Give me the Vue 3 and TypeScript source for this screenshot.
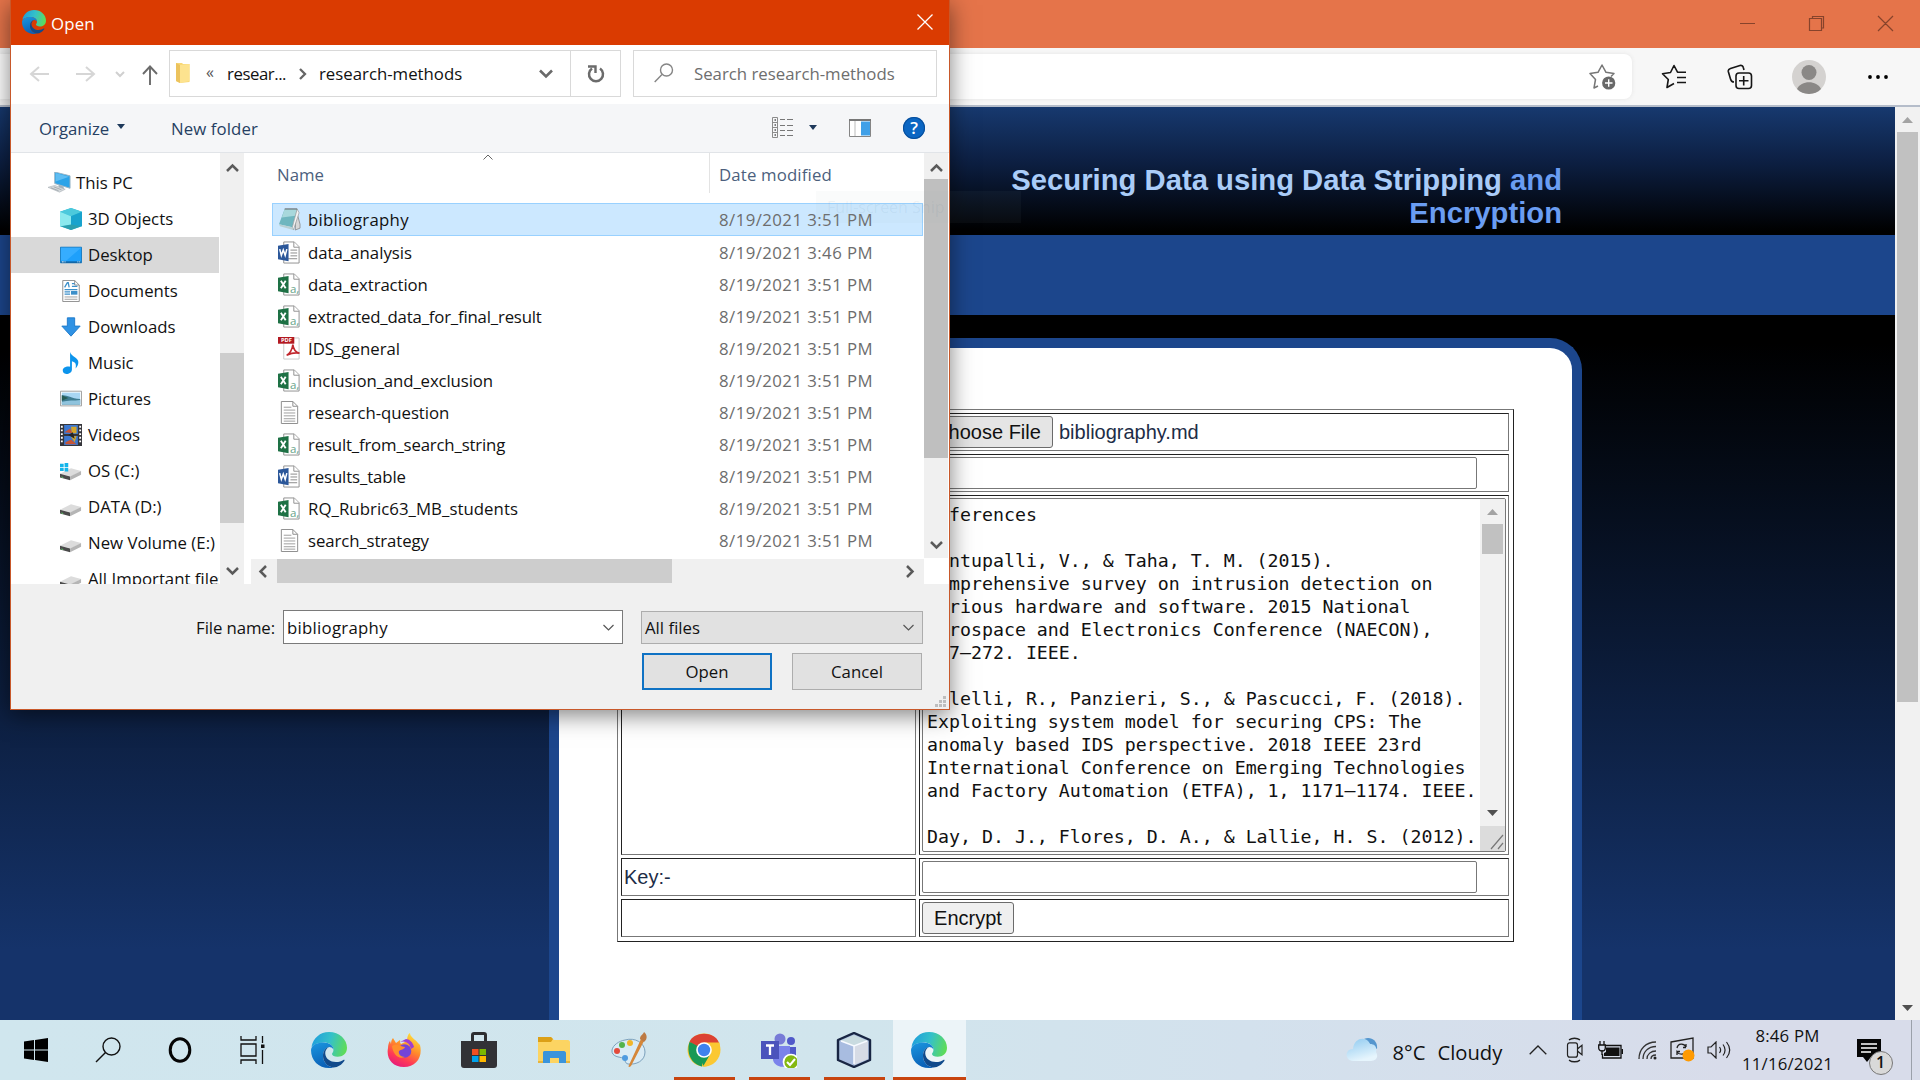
<script setup lang="ts">
interface Entry { label: string; icon: string; active?: boolean }
interface FileEntry { name: string; icon: string; date: string; track?: number }

const places: Entry[] = [
  { label: '3D Objects', icon: 'cube' },
  { label: 'Desktop', icon: 'desktop', active: true },
  { label: 'Documents', icon: 'docs' },
  { label: 'Downloads', icon: 'down' },
  { label: 'Music', icon: 'music' },
  { label: 'Pictures', icon: 'pics' },
  { label: 'Videos', icon: 'video' },
  { label: 'OS (C:)', icon: 'osdrive' },
  { label: 'DATA (D:)', icon: 'drive' },
  { label: 'New Volume (E:)', icon: 'drive' },
  { label: 'All Important files', icon: 'drive' },
]

const d = '8/19/2021 3:51 PM'
const files: FileEntry[] = [
  { name: 'bibliography', icon: 'notepad', date: d, track: 0.27 },
  { name: 'data_analysis', icon: 'word', date: '8/19/2021 3:46 PM' },
  { name: 'data_extraction', icon: 'csv', date: d, track: -0.1 },
  { name: 'extracted_data_for_final_result', icon: 'csv', date: d, track: -0.19 },
  { name: 'IDS_general', icon: 'pdf', date: d },
  { name: 'inclusion_and_exclusion', icon: 'csv', date: d, track: -0.12 },
  { name: 'research-question', icon: 'text', date: d, track: -0.06 },
  { name: 'result_from_search_string', icon: 'csv', date: d, track: -0.17 },
  { name: 'results_table', icon: 'word', date: d, track: -0.12 },
  { name: 'RQ_Rubric63_MB_students', icon: 'csv', date: d, track: 0.05 },
  { name: 'search_strategy', icon: 'text', date: d, track: -0.1 },
]

const references = [
  'References',
  '',
  'Bontupalli, V., & Taha, T. M. (2015).',
  'Comprehensive survey on intrusion detection on',
  'various hardware and software. 2015 National',
  'Aerospace and Electronics Conference (NAECON),',
  '267–272. IEEE.',
  '',
  'Colelli, R., Panzieri, S., & Pascucci, F. (2018).',
  'Exploiting system model for securing CPS: The',
  'anomaly based IDS perspective. 2018 IEEE 23rd',
  'International Conference on Emerging Technologies',
  'and Factory Automation (ETFA), 1, 1171–1174. IEEE.',
  '',
  'Day, D. J., Flores, D. A., & Lallie, H. S. (2012).',
].join('\n')

const page = '<path d="M6 1h11l5 5v17H6z" fill="#fff" stroke="#8f8f8f"/><path d="M16.500 1v5.500H22" fill="#fff" stroke="#8f8f8f"/>'
const driveArt = '<path d="M0 15 12 9l11 3-11 6z" fill="#dcdcdc"/><path d="M0 15v4l11 3v-4z" fill="#4a4a4a"/><path d="M11 18l12-6v4l-12 6z" fill="#b5b5b5"/><path d="M1.500 18.500l2 .6" stroke="#5fd06a"/>'

/* File and folder glyphs, drawn on a 24 unit grid */
const glyphs: Record<string, string> = {
  pc: '<path d="M7 0l16 4v13L7 12z" fill="#2ba3e8" stroke="#9bb4c4"/><path d="M8 1l14 4-14 5z" fill="#5fbdf2"/><path d="M11 13l5 2 1 3h-6z" fill="#9fb3bf"/><path d="M0 16l7-2 11 4-6 3z" fill="#d5dadd" stroke="#a7afb4" stroke-width=".6"/><path d="M3 16.500l8 3M6 15.500l8 3" stroke="#8d979d" stroke-width=".7"/>',
  cube: '<path d="M12 0l12 4v16l-12 4L0 20V4z" fill="#28b9d4"/><path d="M12 0l12 4-12 5L0 4z" fill="#4cc9dc"/><path d="M0 4l12 5v10L0 20z" fill="#8be9ee"/><path d="M12 9l12-5v16l-12-1z" fill="#19a3cd"/><path d="M12 18l11 2-11 4-11-4z" fill="#2b9fae"/>',
  desktop: '<path d="M.5 3.500h23v17H.5z" fill="#1ea0fb" stroke="#1377bd"/><path d="M1 4h22L7 18H1z" fill="#36adff"/><path d="M1 19h22v1.500H1z" fill="#0f5d9c"/><path d="M2 19.500h2m1 0h1m13 0h1m1 0h1" stroke="#fff"/>',
  docs: '<path d="M3 .5h13l5 5v18H3z" fill="#fff" stroke="#888"/><path d="M16 .5v5h5" fill="none" stroke="#888"/><path d="M5 8l3-5h1l1 5M13 4h3M13 7h6M5 10.500h14M5 13h6M5 15.500h6" stroke="#3c8fc9" fill="none" stroke-width="1.400"/><path d="M12 12h7v4h-7z" fill="#3c8fc9"/><path d="M5 18.500h14M5 21h14" stroke="#999"/>',
  down: '<path d="M8 2h8v9h6L12 22 2 11h6z" fill="#2f92e4" stroke="#1d78c9"/>',
  music: '<path d="M11 0c1 5 9 6 9 11 0 3-1 5-3 7 1-5 0-7-4-8v9c0 3-3 5-6 5s-4-2-4-4c0-3 4-5 8-4z" fill="#0c94ec"/>',
  pics: '<path d="M.5 3.500h23v16H.5z" fill="#fff" stroke="#999"/><path d="M2 5h20v13H2z" fill="#a8d6f3"/><path d="M2 8c5-1 9 3 20 4v6H2z" fill="#3e7c92"/><path d="M2 15c7-2 13-1 20-2v5H2z" fill="#8fc3dd"/><path d="M2 8l7 3-7 3z" fill="#255c55"/>',
  video: '<path d="M0 0h24v24H0z" fill="#35353a"/><path d="M4.500 1h15v10h-15zM4.500 13h15v10h-15z" fill="#3d78cf"/><path d="M5 9l6-4 3 5zM6 20l6-3 6 5H6z" fill="#c55538"/><path d="M12 3h6v7h-5zM12 14l6-1-2 7z" fill="#d4a62b"/><path d="M14 9l-5 3 7 4z" fill="#242424"/><path d="M2 2v20M22 2v20" stroke="#fff" stroke-width="2" stroke-dasharray="2 2"/>',
  drive: driveArt,
  osdrive: driveArt + '<path d="M0 4h4v3.500H0zM5 3.400h4v4.100H5zM0 8.500h4V12H0zM5 8.500h4v4.100H5z" fill="#14b5ea"/>',
  notepad: '<path d="M19 2l4 15v4l-5 2z" fill="#d8d8d8" stroke="#777" stroke-width=".7"/><path d="M7 1h13l-5 19-14-3z" fill="#6fb6bf"/><path d="M7 1h13l-2 7-14 2z" fill="#a8d8dc"/><path d="M20 1l-5 19 1 3 6-18z" fill="#f5f5f5" stroke="#999" stroke-width=".7"/><path d="M1 17l14 3 1 3-14-4z" fill="#b9cfd2"/><path d="M7 1h13" stroke="#555"/>',
  word: page + '<path d="M13 9.500h7M13 12.500h7M13 15.500h7M9 18.500h11" stroke="#888"/><path d="M0 5l11-2v18L0 19z" fill="#2b579a"/><path d="M1.800 8.500l1.700 6.500 2-5.500 2 5.500 1.700-6.500" fill="none" stroke="#fff" stroke-width="1.600"/>',
  csv: page + '<path d="M0 5l11-2v18L0 19z" fill="#1e7145"/><path d="M3 8l5 8M8 8l-5 8" stroke="#fff" stroke-width="1.900"/><text x="12.500" y="20.500" font-size="12" font-family="Open Sans" fill="#67a58a">a,</text>',
  pdf: '<path d="M6 1h16v22H6z" fill="#fff" stroke="#c9c9c9"/><path d="M0 0h17v7H0z" fill="#b31921"/><text x="3" y="5.700" font-size="6" font-weight="700" font-family="Open Sans" fill="#fff">PDF</text><path d="M9 19c3-1 6-6 6.500-11 .5 5 3 8 7 9-4-1-9 0-13.500 2z" fill="none" stroke="#c1272d" stroke-width="1.700"/>',
  text: '<path d="M3.500.5h12l5 5v18h-17z" fill="#fff" stroke="#8b8b8b"/><path d="M15.500.5v5h5" fill="none" stroke="#8b8b8b"/><path d="M6 6.500h8M6 9.500h12M6 12.500h12M6 15.500h12M6 18.500h12M6 21h12" stroke="#9c9c9c"/>',
}

const edge = `<defs><linearGradient id="eg1" x1="0" y1=".4" x2="1" y2=".6"><stop offset="0" stop-color="#1f9fdc"/><stop offset=".5" stop-color="#35c1c8"/><stop offset="1" stop-color="#60dd54"/></linearGradient><linearGradient id="eg2" x1="0" y1="0" x2=".3" y2="1"><stop offset="0" stop-color="#1b97e0"/><stop offset="1" stop-color="#0b62b8"/></linearGradient></defs>
<path d="M.3 10C1.500 4 6 0 12 0c7 0 12 5 12 10.500 0 4-3 6-6.200 6-2.300 0-3.800-.9-3.800-1.900 0-.7 1-1.100 1-2.800 0-3-3-4.800-6.500-4.800C4 7 1 9 .3 10z" fill="url(#eg1)"/>
<path d="M0 12c.3-3.500 4-5 8.500-5C12 7 15 9 15 11.800c-.5-1.300-2-1.800-3-1.800-2.500.5-4 3-4 6 0 4 3 7.300 7 7.600-1 .4-2 .4-3 .4C5 24 0 19 0 12z" fill="url(#eg2)"/>
<path d="M8 16c0-3 1.500-5.500 4-6-1.800 1-2.700 2.800-2.500 4.500C9.800 18 13 20 16.500 20c2.300 0 4-.7 5.100-1.400.6-.3 1 .1.600.7C20.500 21.800 18 23.500 15 23.600c-4-.3-7-3.600-7-7.600z" fill="#114a8b"/>`

/* Taskbar application icons, drawn on a 36 unit grid */
const apps: { art: string; open?: boolean; active?: boolean }[] = [
  { art: `<g transform="scale(1.500)">${edge}</g>` },
  { art: '<defs><linearGradient id="ff" x1=".8" y1="0" x2=".3" y2="1"><stop offset="0" stop-color="#ffe83a"/><stop offset=".45" stop-color="#ff8a2a"/><stop offset=".75" stop-color="#ff3a56"/><stop offset="1" stop-color="#e61b7c"/></linearGradient></defs><path d="M7 6l3 5 4-3c0 2 0 3 1 4l6-3c0-4 1-7 3-8 0 4 5 6 8 10l2 2c3 12-4 22-16 22C6 35 0 26 2 16c0-3 1-6 2-7l1 3c0-3 1-5 2-6z" fill="url(#ff)"/><circle cx="18.500" cy="19" r="6.800" fill="#7544d8"/><path d="M6 14c4-3 8 0 13 1-1 3-4 2-6 4-1 3 2 6 6 6-7 3-12-3-13-11z" fill="#ff8f2c"/><path d="M14 10c5-2 10 1 11 7l3-2c-1-5-5-8-8-8z" fill="#a03fd0"/>' },
  { art: '<path d="M10 10V3c0-2 1-3 3-3h10c2 0 3 1 3 3v7h-3V3H13v7z" fill="#2d2d30"/><path d="M0 9h36v24c0 2-1 3-3 3H3c-2 0-3-1-3-3z" fill="#323236"/><path d="M11 17h6.500v6H11z" fill="#f04f23"/><path d="M18.500 17H25v6h-6.500z" fill="#7db700"/><path d="M11 24h6.500v6H11z" fill="#00a2ec"/><path d="M18.500 24H25v6h-6.500z" fill="#ffb800"/>' },
  { art: '<path d="M2 5h13l3 3h14c1 0 2 1 2 2v21H2z" fill="#fcd462"/><path d="M2 5h13l2 2-2 3H2z" fill="#dca017"/><path d="M8 19h20c1 0 2 1 2 2v10h-7v-5h-9v5H7V20z" fill="#3a94db"/><path d="M2 29h5v2H2zM30 29h4v2h-4z" fill="#e8b43c"/>' },
  { art: '<path d="M14 8c10-3 20 3 20 12S25 33 17 32c-4-1-2-5-5-6S0 25 1 18c1-5 7-9 13-10z" fill="#d9ebf5" stroke="#7ba0bb"/><circle cx="6" cy="19" r="3" fill="#e34b3c"/><circle cx="11" cy="13" r="3" fill="#53b34c"/><circle cx="19" cy="11" r="3" fill="#f1b62b"/><circle cx="14" cy="26" r="3" fill="#4f9be0"/><path d="M30 7l3 2-13 25c-2 2-3 1-2-1z" fill="#d5873a"/><path d="M29 7c0-4 3-4 4-7 3 2 4 7 0 10z" fill="#bd7a43"/>' },
  { open: true, art: '<circle cx="18" cy="18" r="16.500" fill="#fbc832"/><path d="M18 18L3.500 10C1 17 2 31 16 34.500z" fill="#189955"/><path d="M18 18L3.500 10C8-1 29-1 33 11H18z" fill="#dc4233"/><path d="M4 10l8 13 6 11.400L25 21z" fill="#189955"/><path d="M18 10.500h15.500C36 23 28 35 17 34.500L25 21z" fill="#fbc832"/><circle cx="18" cy="18" r="7.800" fill="#fff"/><circle cx="18" cy="18" r="6.200" fill="#3f82ee"/>' },
  { open: true, art: '<circle cx="19" cy="7" r="5.500" fill="#777bd7"/><circle cx="30" cy="9" r="4" fill="#5059c9"/><path d="M23 15h12v11c0 6-9 8-12 2z" fill="#5059c9"/><path d="M12 14h17v14c0 9-15 9-17 0z" fill="#7b83eb"/><path d="M0 9h18v18H0z" fill="#4b53bc"/><path d="M5 13.500h8M9 13.500V23" stroke="#fff" stroke-width="2.300"/><circle cx="30" cy="30" r="7.500" fill="#84b812" stroke="#fff" stroke-width="1.700"/><path d="M26 30l3 3 5-6" fill="none" stroke="#fff" stroke-width="2"/>' },
  { open: true, art: '<path d="M18 1l16 7v20l-16 7L2 28V8z" fill="#a9bddd" stroke="#182543" stroke-width="2.400" stroke-linejoin="round"/><path d="M18 3l14 6-14 5L4 9z" fill="#c9dbe0"/><path d="M4 9l14 5v18L4 27z" fill="#a8bce0"/><path d="M18 14l14-5v18l-14 6z" fill="#d6dbe5"/><path d="M18 14v18M5 9l13 5 13-5" fill="none" stroke="#f7faff" stroke-width="1.500"/>' },
  { open: true, active: true, art: `<g transform="scale(1.500)">${edge}</g>` },
]
</script>

<template>
  <div class="screen">
    <section class="browser">
      <header class="titlebar">
        <svg width="180" height="48" viewBox="0 0 180 48" fill="none" stroke="#87432b" stroke-width="1.200">
          <path d="M0 23.500h15M69.500 18.500h12v12h-12zM72.500 18v-1.500h11v11.500H82M138 16l15 15M153 16l-15 15" />
        </svg>
      </header>
      <div class="toolbar">
        <div class="address">
          <svg width="28" height="28" viewBox="0 0 28 28"><path d="M9 23l-4 2 1.500-8.500L1 10.500l8-1.200L13 2l4 7.300 8 1.200-3 3" fill="none" stroke="#767676" stroke-width="1.500" stroke-linejoin="round" /><circle cx="19.700" cy="20" r="6.600" fill="#686868" /><path d="M16 20h7.500M19.700 16.300v7.500" stroke="#fff" stroke-width="1.400" /></svg>
        </div>
        <svg class="t-star" width="26" height="26" viewBox="0 0 26 26" fill="none" stroke="#161616" stroke-width="1.600" stroke-linejoin="round"><path d="M13 19.500L6 23.500l1.300-8L1.500 9.700l8-1.200L13 1.500l3.500 6.700H25M16 13.500h9M16 18.500h9" /></svg>
        <svg class="t-coll" width="26" height="26" viewBox="0 0 26 26" fill="none" stroke="#161616" stroke-width="1.600"><path d="M7 18c-2 0-3-1-3.500-3L1.300 7.500C1 6 2 5 3.500 4.500L13 1.500c1.500-.4 3 .3 3.300 2L17 6" /><rect x="9" y="9" width="15.500" height="15.500" rx="3" /><path d="M16.700 12v9.500M12 16.700h9.500" /></svg>
        <svg class="t-user" width="34" height="34" viewBox="0 0 34 34"><circle cx="17" cy="17" r="17" fill="#d4d2d0" /><circle cx="17" cy="12.500" r="7.500" fill="#8a8886" /><path d="M5 29c4-9 20-9 24 0-6 6.500-18 6.500-24 0z" fill="#8a8886" /></svg>
        <svg class="t-dots" width="20" height="4" viewBox="0 0 20 4"><circle cx="2" cy="2" r="1.900" /><circle cx="10" cy="2" r="1.900" /><circle cx="18" cy="2" r="1.900" /></svg>
      </div>
      <div class="viewport">
        <main class="site">
          <div class="masthead">
            <h1>Securing Data using Data Stripping <span>and<br />Encryption</span></h1>
          </div>
          <div class="menu-band"></div>
          <div class="site-body">
            <div class="panel">
              <div class="form-table">
                <div class="cell"></div>
                <div class="cell"><span class="btn choose">Choose File</span><span class="chosen">bibliography.md</span></div>
                <div class="cell"></div>
                <div class="cell"><div class="field"></div></div>
                <div class="cell"></div>
                <div class="cell">
                  <div class="area">
                    <pre>{{ references }}</pre>
                    <div class="area-bar">
                      <svg width="25" height="25" viewBox="0 0 25 25"><path d="M7 16l5.500-6 5.500 6z" fill="#a3a3a3" /></svg>
                      <div class="area-thumb"></div>
                      <svg class="area-down" width="25" height="25" viewBox="0 0 25 25"><path d="M7 10l5.500 6 5.500-6z" fill="#505050" /></svg>
                      <svg class="grip" width="25" height="25" viewBox="0 0 25 25"><path d="M11 23L23 9M18 23l5-6" stroke="#777" stroke-width="1.200" /></svg>
                    </div>
                  </div>
                </div>
                <div class="cell">Key:-</div>
                <div class="cell"><div class="field"></div></div>
                <div class="cell"></div>
                <div class="cell"><span class="btn encrypt">Encrypt</span></div>
              </div>
            </div>
          </div>
        </main>
        <aside class="page-bar">
          <svg width="25" height="25" viewBox="0 0 25 25"><path d="M7 16l5.500-6 5.500 6z" fill="#a3a3a3" /></svg>
          <div class="page-thumb"></div>
          <svg class="last" width="25" height="25" viewBox="0 0 25 25"><path d="M7 10l5.500 6 5.500-6z" fill="#505050" /></svg>
        </aside>
      </div>
    </section>

    <section class="dialog">
      <header class="d-title">
        <svg width="24" height="24" viewBox="0 0 24 24" v-html="edge"></svg>
        <span>Open</span>
        <svg class="d-close" width="16" height="16" viewBox="0 0 16 16"><path d="M.5.5l15 15M15.500.5l-15 15" stroke="#fff" stroke-width="1.300" /></svg>
      </header>
      <div class="d-nav">
        <svg class="arrows" width="130" height="46" viewBox="0 0 130 46" fill="none" stroke-width="2">
          <path d="M38 24H21M28 17l-8 7 8 7M65 24h17M75 17l8 7-8 7" stroke="#d6d6d6" />
          <path d="M105 22l4 4 4-4" stroke="#d0d0d0" />
        </svg>
        <svg class="up" width="18" height="20" viewBox="0 0 18 20" fill="none" stroke="#6b6b6b" stroke-width="1.900"><path d="M9 20V2M2 9l7-7.500L16 9" /></svg>
        <div class="crumbs">
          <svg class="folder" width="14" height="22" viewBox="0 0 14 22"><path d="M0 1h6l1 1h6.500v18L4 21l-4-2z" fill="#f8d775" /><path d="M4 3l9.500-1v17L4 21z" fill="#fde38f" /><path d="M0 1l4 2v18l-4-2z" fill="#ecc35d" /></svg>
          <span class="chev">«</span>
          <span class="c1">resear...</span>
          <svg class="sep" width="8" height="12" viewBox="0 0 8 12"><path d="M1 1l5 5-5 5" fill="none" stroke="#666" stroke-width="2.300" /></svg>
          <span class="c2">research-methods</span>
          <svg class="drop" width="14" height="10" viewBox="0 0 14 10"><path d="M1 1.500l6 6 6-6" fill="none" stroke="#6a6a6a" stroke-width="2.600" /></svg>
          <div class="reload"><svg width="18" height="18" viewBox="0 0 18 18"><path d="M5 3.500a7 7 0 1 0 8 0" fill="none" stroke="#6b6b6b" stroke-width="2.500" /><path d="M1 1.500h7.500V8" fill="none" stroke="#6b6b6b" stroke-width="2.400" /></svg></div>
        </div>
        <div class="search">
          <svg width="20" height="20" viewBox="0 0 20 20" fill="none" stroke="#858585" stroke-width="1.400"><circle cx="12.500" cy="7" r="6" /><path d="M8 11.500L.7 19" /></svg>
          <span>Search research-methods</span>
        </div>
      </div>
      <div class="d-tools">
        <span class="organize">Organize</span>
        <svg class="tri" width="8" height="5" viewBox="0 0 8 5"><path d="M0 0h8L4 5z" fill="#1e395b" /></svg>
        <span class="newf">New folder</span>
        <svg class="views" width="22" height="22" viewBox="0 0 22 22" fill="none" stroke="#8b8b8b"><path d="M.5.5h5v20h-5zM.5 5.500h5M.5 10.500h5M.5 15.500h5" /><path d="M8 2.500h5m2 0h6M8 8.500h5m2 0h6M8 13.500h5m2 0h6M8 18.500h5m2 0h6" stroke="#777" stroke-width="1.200" /><path d="M2.500 3h1.500M2.500 8h1.500M2.500 13h1.500M2.500 18h1.500" stroke="#555" stroke-width="1.500" /></svg>
        <svg class="tri2" width="8" height="5" viewBox="0 0 8 5"><path d="M0 0h8L4 5z" fill="#1e395b" /></svg>
        <svg class="pane" width="22" height="18" viewBox="0 0 22 18"><path d="M.5.5h21v17H.5z" fill="#fff" stroke="#858585" /><path d="M0 1h22" stroke="#777" stroke-width="2" /><path d="M12 2.500h9v14h-9z" fill="#40a0e8" /><path d="M6 2v15" stroke="#bbb" /></svg>
        <span class="help">?</span>
      </div>
      <div class="d-main">
        <nav class="tree">
          <div class="node root"><svg width="23" height="23" viewBox="0 0 24 24" v-html="glyphs.pc"></svg><span>This PC</span></div>
          <div v-for="p in places" :key="p.label" class="node" :class="{ sel: p.active }">
            <svg width="22" height="22" viewBox="0 0 24 24" v-html="glyphs[p.icon]"></svg><span>{{ p.label }}</span>
          </div>
        </nav>
        <div class="bar tree-bar">
          <svg width="24" height="27" viewBox="0 0 24 27"><path d="M7 18l5.500-5.500L18 18" fill="none" stroke="#5a5a5a" stroke-width="2.500" /></svg>
          <div class="thumb t1"></div>
          <svg class="last" width="24" height="26" viewBox="0 0 24 26"><path d="M7 10l5.500 5.500L18 10" fill="none" stroke="#5a5a5a" stroke-width="2.500" /></svg>
        </div>
        <div class="list-wrap">
          <div class="list-top">
            <div class="list">
              <div class="cols">
                <span class="col-name">Name<svg class="sort" width="10" height="6" viewBox="0 0 10 6"><path d="M.5 5.500L5 1l4.500 4.500" fill="none" stroke="#666" /></svg></span>
                <span class="col-date">Date modified</span>
              </div>
              <div v-for="(f, i) in files" :key="f.name" class="row" :class="{ picked: i === 0 }">
                <svg width="23" height="23" viewBox="0 0 24 24" v-html="glyphs[f.icon]"></svg>
                <span class="fname" :style="{ letterSpacing: (f.track ?? 0) + 'px' }">{{ f.name }}</span>
                <span class="fdate">{{ f.date }}</span>
              </div>
            </div>
            <div class="bar">
              <svg width="24" height="26" viewBox="0 0 24 26"><path d="M7 18l5.500-5.500L18 18" fill="none" stroke="#5a5a5a" stroke-width="2.500" /></svg>
              <div class="thumb t2"></div>
              <svg class="last" width="24" height="26" viewBox="0 0 24 26"><path d="M7 10l5.500 5.500L18 10" fill="none" stroke="#5a5a5a" stroke-width="2.500" /></svg>
            </div>
          </div>
          <div class="hbar">
            <svg width="26" height="24" viewBox="0 0 26 24"><path d="M15 7l-5.500 5.500L15 18" fill="none" stroke="#5a5a5a" stroke-width="2.500" /></svg>
            <div class="hthumb"></div>
            <svg class="hlast" width="26" height="24" viewBox="0 0 26 24"><path d="M9 7l5.500 5.500L9 18" fill="none" stroke="#5a5a5a" stroke-width="2.500" /></svg>
          </div>
        </div>
      </div>
      <footer class="d-foot">
        <div class="f-row">
          <label>File name:</label>
          <div class="combo name">bibliography<svg width="11" height="7" viewBox="0 0 11 7"><path d="M.5 1l5 5 5-5" fill="none" stroke="#555" stroke-width="1.200" /></svg></div>
          <div class="combo type">All files<svg width="11" height="7" viewBox="0 0 11 7"><path d="M.5 1l5 5 5-5" fill="none" stroke="#555" stroke-width="1.200" /></svg></div>
        </div>
        <div class="f-row buttons">
          <button class="primary">Open</button>
          <button>Cancel</button>
        </div>
        <svg class="size" width="12" height="12" viewBox="0 0 12 12" fill="#bdbdbd"><path d="M8 0h3v3H8zM4 4h3v3H4zM8 4h3v3H8zM0 8h3v3H0zM4 8h3v3H4zM8 8h3v3H8z" /></svg>
      </footer>
    </section>
    <div class="snip-tip">Full-screen Snip</div>

    <footer class="taskbar">
      <div class="sys"><svg width="24" height="24" viewBox="0 0 24 24"><path d="M0 3.500l10-1.500v9.500H0zM11 1.900L24 0v11.500H11zM0 12.500h10V22L0 20.500zM11 12.500h13V24l-13-1.900z" /></svg></div>
      <div class="sys"><svg width="26" height="26" viewBox="0 0 26 26" fill="none" stroke="#111" stroke-width="1.400"><circle cx="16.500" cy="9.500" r="8.500" /><path d="M10.500 15.500L1 25" /></svg></div>
      <div class="sys"><svg width="24" height="28" viewBox="0 0 24 28"><ellipse cx="12" cy="14" rx="9.800" ry="11.200" fill="none" stroke="#050505" stroke-width="3" /></svg></div>
      <div class="sys"><svg width="25" height="28" viewBox="0 0 25 28" fill="none" stroke="#111" stroke-width="1.300"><path d="M1 0v4h15V0M1 8h15v12H1zM1 28v-4h15v4M22.500 0v7M22.500 14v14" /><path d="M21 8.500h3.500V12H21z" fill="#111" stroke="none" /></svg></div>
      <div v-for="(a, i) in apps" :key="i" class="app" :class="{ open: a.open, active: a.active }">
        <svg width="36" height="36" viewBox="0 0 36 36" v-html="a.art"></svg>
      </div>
      <div class="tray">
        <svg width="33" height="24" viewBox="0 0 33 24"><defs><linearGradient id="cl" x1="0" y1="0" x2=".4" y2="1"><stop offset="0" stop-color="#8fcaf0" /><stop offset="1" stop-color="#e6f5fd" /></linearGradient></defs><path d="M18 1c7-3 14 2 13 10l-7-5z" fill="#5596ce" /><path d="M7 23c-9-1-8-12 0-12C8-1 21-2 24 6c5 0 7 3 6 8 3 5 0 9-5 9z" fill="url(#cl)" /></svg>
        <span class="temp">8°C</span><span class="sky">Cloudy</span>
        <svg class="caret" width="18" height="10" viewBox="0 0 18 10"><path d="M.7 9.300L9 1l8.300 8.300" fill="none" stroke="#222" stroke-width="1.300" /></svg>
        <svg class="meet" width="18" height="26" viewBox="0 0 18 22" preserveAspectRatio="none" fill="none" stroke="#222" stroke-width="1.200"><rect x="1.500" y="5" width="10" height="12" rx="2" /><path d="M11.500 10l4.500-3v8l-4.500-3M3 2.500c3-2 8-2 11 0M3 19.500c3 2 8 2 11 0" /></svg>
        <svg class="batt" width="25" height="18" viewBox="0 0 25 18"><path d="M7 4.500h16V17H4.500v-4" fill="none" stroke="#111" stroke-width="1.300" /><path d="M8 6.500h13.500V15H6v-3l2-1zM23.500 8H25v5h-1.500z" fill="#111" /><path d="M2 0v4M6 0v4M.7 4h6.600v3c0 4-6.600 4-6.600 0zM4 9v5" fill="none" stroke="#111" stroke-width="1.300" /></svg>
        <svg class="wifi" width="19" height="19" viewBox="0 0 19 19" fill="none" stroke="#333" stroke-width="1.300"><path d="M1 18C1 8 8 1 18 1M5 18C5 11 10 5.500 18 5.500M9 18c0-5 4-8 9-8M13 18c0-3 2-4 5-4" /><circle cx="17" cy="17" r="1.500" fill="#222" stroke="none" /></svg>
        <svg class="upd" width="25" height="26" viewBox="0 0 25 26"><path d="M1 5l22-4v20H1z" fill="none" stroke="#222" stroke-width="1.300" /><path d="M7 11c1-5 7-5 9-1V7m0 3.500h-3M16 14c-1 4-7 4-9 1v3m0-3.500h3" fill="none" stroke="#222" stroke-width="1.300" /><circle cx="18.500" cy="18.500" r="6" fill="#ff9a00" /></svg>
        <svg class="vol" width="24" height="18" viewBox="0 0 24 18" fill="none" stroke="#222" stroke-width="1.200"><path d="M1 6h3l5-5v16l-5-5H1zM12.500 6c1.500 2 1.500 4 0 6M16 3.500c3 4 3 7 0 11M19.500 1c4 5 4 11 0 16" /></svg>
        <div class="clock"><span>8:46 PM</span><span>11/16/2021</span></div>
        <div class="note"><svg width="24" height="23" viewBox="0 0 24 23"><path d="M0 0h24v18H14l-4 5-4-5H0z" fill="#050505" /><path d="M4 5h16M4 9h16M4 13h10" stroke="#fff" stroke-width="1.300" /></svg><b>1</b></div>
        <i class="peek"></i>
      </div>
    </footer>
  </div>
</template>

<style>
body { margin: 0; overflow: hidden; }
</style>

<style scoped>
* { box-sizing: border-box; }
svg { display: block; flex: none; }
.screen { position: relative; width: 1920px; height: 1080px; display: flex; flex-direction: column; overflow: hidden; font-family: "Open Sans", sans-serif; font-size: 16.8px; color: #111; }

.browser { height: 1020px; display: flex; flex-direction: column; }
.titlebar { height: 48px; background: #e5744a; padding-left: 1740px; }
.toolbar { height: 59px; background: #f7f7f7; border-bottom: 2px solid #b5bdca; display: flex; align-items: center; }
.address { width: 1632px; height: 45px; background: #fff; border-radius: 0 8px 8px 0; box-shadow: 0 0 4px #e4e4e4; display: flex; align-items: center; justify-content: flex-end; padding-right: 15px; }
.t-star { margin-left: 29px; }
.t-coll { margin-left: 40px; }
.t-user { margin-left: 39px; }
.t-dots { margin-left: 42px; }

.viewport { flex: 1; display: flex; min-height: 0; }
.site { width: 1895px; display: flex; flex-direction: column; font-family: "Liberation Sans", Arial, sans-serif; font-size: 20px; color: #1d2d47; }
.masthead { height: 128px; background: linear-gradient(#17396f, #0c1e40 45%, #000 97%); padding: 57px 333px 0 0; }
h1 { margin: 0; text-align: right; font-size: 29.24px; line-height: 33px; font-weight: 700; color: #aaccf8; }
h1 span { color: #6a9df2; }
.menu-band { height: 80px; background: #1c468c; }
.site-body { flex: 1; background: linear-gradient(#000 4%, #15336a 90%); padding: 23px 0 0 549px; min-height: 0; }
.panel { width: 1033px; height: 100%; background: #fff; border: solid #1c468c; border-width: 10px 10px 0; border-radius: 32px 32px 0 0; padding: 61px 0 0 58px; }
.form-table { width: 897px; height: 533px; border: 1px solid #777; border-right-color: #222; border-bottom-color: #222; padding: 3px; display: grid; grid-template-columns: 295px 590px; grid-template-rows: 38px 38px 360px 38px 38px; gap: 3px; }
.cell { border: 1px solid #777; border-top-color: #222; border-left-color: #222; padding: 2px; display: flex; align-items: center; }
.btn { height: 32px; border: 1px solid #6b6b6b; border-radius: 3px; background: #efefef; color: #111; display: flex; align-items: center; justify-content: center; }
.choose { width: 131px; background: #e5e5e5; }
.encrypt { width: 92px; }
.chosen { margin-left: 6px; }
.field { width: 555px; height: 32px; border: 1px solid #777; border-radius: 2px; }
.area { width: 584px; height: 354px; border: 1px solid #777; border-radius: 2px; display: flex; overflow: hidden; }
.area pre { flex: 1; margin: 0; padding: 4px 0 0 4px; font-family: "DejaVu Sans Mono", monospace; font-size: 18.25px; line-height: 23px; color: #111; overflow: hidden; }
.area-bar { width: 25px; background: #f1f1f1; display: flex; flex-direction: column; align-items: center; }
.area-thumb { width: 21px; height: 30px; background: #c1c1c1; }
.area-down { margin-top: auto; }
.grip { background: #dcdcdc; margin-top: 1px; }
.page-bar { width: 25px; background: #f1f1f1; display: flex; flex-direction: column; align-items: center; }
.page-thumb { width: 21px; height: 570px; background: #c1c1c1; }
.last { margin-top: auto; }

.dialog { position: absolute; left: 10px; top: 0; width: 940px; height: 710px; background: #fff; border: solid #c8582a; border-width: 0 1px 1px; box-shadow: 0 5px 22px rgba(0, 0, 0, .5); display: flex; flex-direction: column; color: #111; }
.d-title { height: 45px; background: #da3b01; color: #fff; display: flex; align-items: center; padding: 0 16px 0 11px; }
.d-title svg { margin-bottom: 1px; }
.d-title span { margin-left: 5px; padding-top: 1px; letter-spacing: .2px; }
.d-close { margin-left: auto; }
.d-nav { height: 59px; display: flex; align-items: flex-start; padding-top: 5px; }
.up { margin-top: 15px; }
.crumbs { width: 452px; height: 47px; margin-left: 10px; border: 1px solid #d9d9d9; display: flex; align-items: center; padding-left: 6px; }
.folder { margin-top: -2px; }
.chev { width: 15px; margin-left: 16px; color: #555; font-size: 16px; margin-top: -4px; }
.c1 { width: 60px; margin-left: 6px; white-space: nowrap; letter-spacing: -.45px; }
.sep { margin-left: 12px; }
.c2 { margin-left: 12px; white-space: nowrap; }
.drop { margin-left: auto; margin-right: 17px; }
.reload { width: 50px; height: 45px; border-left: 1px solid #d9d9d9; display: flex; align-items: center; justify-content: center; }
.search { width: 304px; height: 47px; margin-left: 12px; border: 1px solid #d9d9d9; display: flex; align-items: center; padding-left: 20px; color: #6e6e6e; }
.search span { margin-left: 20px; white-space: nowrap; }
.search svg { margin-top: -2px; }
.d-tools { height: 49px; background: #f5f6f8; border-bottom: 1px solid #e1e4e8; display: flex; align-items: center; color: #263f63; padding-left: 28px; white-space: nowrap; }
.organize { width: 71px; }
.tri { margin-left: 7px; margin-top: -3px; }
.newf { width: 87px; margin-left: 46px; letter-spacing: .1px; }
.views { margin-left: 514px; }
.tri2 { margin-left: 15px; margin-top: -1px; }
.pane { margin-left: 32px; }
.help { width: 22px; height: 22px; margin-left: 32px; margin-top: -1px; border-radius: 50%; background: #0b66c3; box-shadow: inset 0 0 0 1px #084f9c; color: #fff; display: flex; align-items: center; justify-content: center; font-weight: 600; font-size: 17px; }
.d-main { height: 431px; display: flex; overflow: hidden; }
.tree { width: 209px; padding: 12px 1px 0 0; overflow: hidden; }
.node { height: 36px; display: flex; align-items: center; padding-left: 49px; white-space: nowrap; overflow: hidden; }
.node span { padding-bottom: 1px; }
.node svg { margin-right: 6px; }
.node.root { padding-left: 37px; }
.node.root svg { margin-right: 5px; }
.node.sel { background: #d9d9d9; }
.bar { width: 24px; background: #f0f0f0; display: flex; flex-direction: column; }
.tree-bar { margin-right: 7px; }
.thumb { width: 24px; background: #cdcdcd; }
.t1 { height: 170px; margin-top: 173px; }
.t2 { height: 279px; background: #bfbfbf; }
.list-wrap { flex: 1; display: flex; flex-direction: column; }
.list-top { display: flex; height: 405px; }
.list { width: 673px; overflow: hidden; }
.cols { height: 50px; display: flex; color: #4c5f7d; }
.col-name { position: relative; width: 459px; height: 40px; padding: 10px 0 0 26px; border-right: 1px solid #e3e3e3; }
.sort { position: absolute; left: 232px; top: 1px; }
.col-date { padding: 10px 0 0 9px; letter-spacing: .15px; }
.row { height: 32px; display: flex; align-items: center; margin: 0 1px 0 21px; padding-left: 6px; }
.row .fname { width: 411px; margin-left: 7px; }
.row .fdate { color: #6d6d6d; white-space: nowrap; letter-spacing: .44px; }
.row.picked { background: #cce8ff; border: 1px solid #99d1ff; height: 33px; padding-left: 5px; }
.row:last-child { margin-bottom: -1px; }
.hbar { width: 673px; height: 25px; margin-top: 1px; background: #f0f0f0; display: flex; }
.hthumb { width: 395px; height: 24px; background: #cdcdcd; }
.hlast { margin-left: auto; }
.d-foot { flex: 1; background: #f0f0f0; position: relative; padding-top: 26px; }
.f-row { display: flex; align-items: center; }
label { width: 264px; text-align: right; letter-spacing: -.1px; }
.combo { height: 34px; border: 1px solid #7a7a7a; background: #fff; display: flex; align-items: center; justify-content: space-between; padding: 0 8px 0 3px; }
.name { width: 340px; margin-left: 8px; padding-top: 1px; letter-spacing: .27px; }
.type { width: 282px; height: 33px; margin-left: 18px; background: #e1e1e1; border-color: #adadad; }
.buttons { margin-top: 9px; padding-left: 631px; gap: 20px; }
button { width: 130px; height: 37px; padding: 0; border: 1px solid #adadad; background: #e1e1e1; font: inherit; color: #111; }
button.primary { border: 2px solid #0f72c4; }
.size { position: absolute; right: 2px; bottom: 1px; }
.snip-tip { position: absolute; left: 816px; top: 191px; width: 205px; height: 32px; background: rgba(150, 170, 180, .05); color: rgba(70, 110, 140, .08); padding: 4px 11px; white-space: nowrap; font-size: 16px; line-height: 24px; }

.taskbar { height: 60px; background: linear-gradient(90deg, #d0e6ee, #d1e5ed 45%, #d3e1ed 65%, #d8dcea 90%); display: flex; }
.sys { width: 72px; display: flex; align-items: center; justify-content: center; }
.app { width: 75px; height: 60px; padding: 3px 0 0; display: flex; align-items: center; justify-content: center; border-bottom: 3px solid transparent; }
.app.open { width: 61px; margin: 0 7px; border-bottom-color: #c8440f; }
.app.active { width: 73px; margin: 0 1px; background: #ecf4f8; }
.sys + .app { margin-left: 3.5px; }
.tray { flex: 1; display: flex; align-items: center; padding-left: 379px; }
.temp, .sky { font-size: 20.2px; padding-top: 4px; white-space: nowrap; }
.temp { width: 33px; margin-left: 14px; }
.sky { width: 66px; margin-left: 12px; }
.caret { margin-left: 25px; }
.meet { margin-left: 19px; }
.batt { margin-left: 14px; }
.wifi { margin-left: 15px; }
.upd { margin-left: 13px; }
.vol { margin-left: 12px; }
.clock { width: 94px; margin-left: 10px; display: flex; flex-direction: column; align-items: center; line-height: 28px; white-space: nowrap; letter-spacing: .2px; }
.note { position: relative; margin-left: 22px; }
.note b { position: absolute; left: 12px; top: 12px; width: 24px; height: 24px; border: 1px solid #777; border-radius: 50%; background: #d9d9d9; text-align: center; font-size: 16px; line-height: 21px; font-weight: 600; }
.peek { width: 1px; height: 60px; margin-left: 30px; background: #9aa0aa; }
</style>
